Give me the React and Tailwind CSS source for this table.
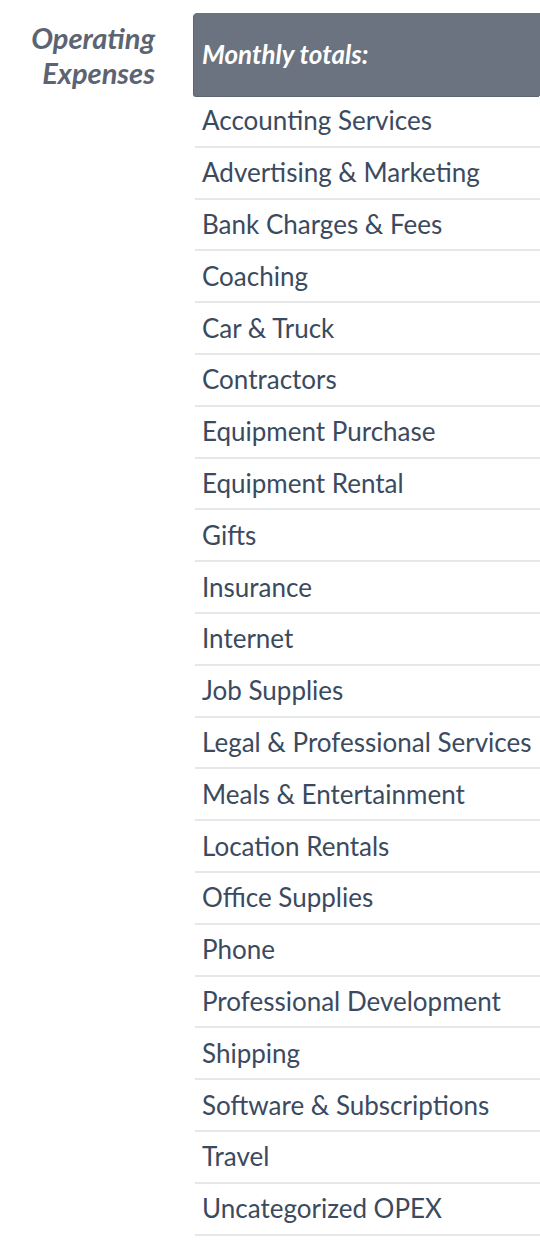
import React from 'react';

const expenses = [
  'Accounting Services',
  'Advertising & Marketing',
  'Bank Charges & Fees',
  'Coaching',
  'Car & Truck',
  'Contractors',
  'Equipment Purchase',
  'Equipment Rental',
  'Gifts',
  'Insurance',
  'Internet',
  'Job Supplies',
  'Legal & Professional Services',
  'Meals & Entertainment',
  'Location Rentals',
  'Office Supplies',
  'Phone',
  'Professional Development',
  'Shipping',
  'Software & Subscriptions',
  'Travel',
  'Uncategorized OPEX',
];

const App = () => {
  return (
    <div className="w-[540px] min-h-[1260px] bg-white pt-[13px] font-['Lato','Liberation_Sans',sans-serif]">
      <div className="flex">
        {/* Section label */}
        <div className="w-[194px] shrink-0 h-[83px] flex items-center justify-end pr-[39px]">
          <h2 className="text-right text-[29px] leading-[35px] font-bold italic text-[#5b6473]">
            Operating
            <br />
            Expenses
          </h2>
        </div>

        {/* Table */}
        <div className="flex-1">
          <div className="h-[83px] flex items-center pl-[8px] bg-[#6b7280] rounded-tl-[3px] rounded-bl-[3px] shadow-[-1px_1px_0_#5f6673]">
            <span className="text-[26px] font-bold italic text-white">Monthly totals:</span>
          </div>
          {expenses.map((name) => (
            <div
              key={name}
              className="h-[51.8px] flex items-center pl-[7px] ml-[1px] border-b-2 border-[#e5e7eb]"
            >
              <span className="text-[26px] text-[#3b4a5e] whitespace-nowrap">{name}</span>
            </div>
          ))}
        </div>
      </div>
    </div>
  );
};

export default App;
